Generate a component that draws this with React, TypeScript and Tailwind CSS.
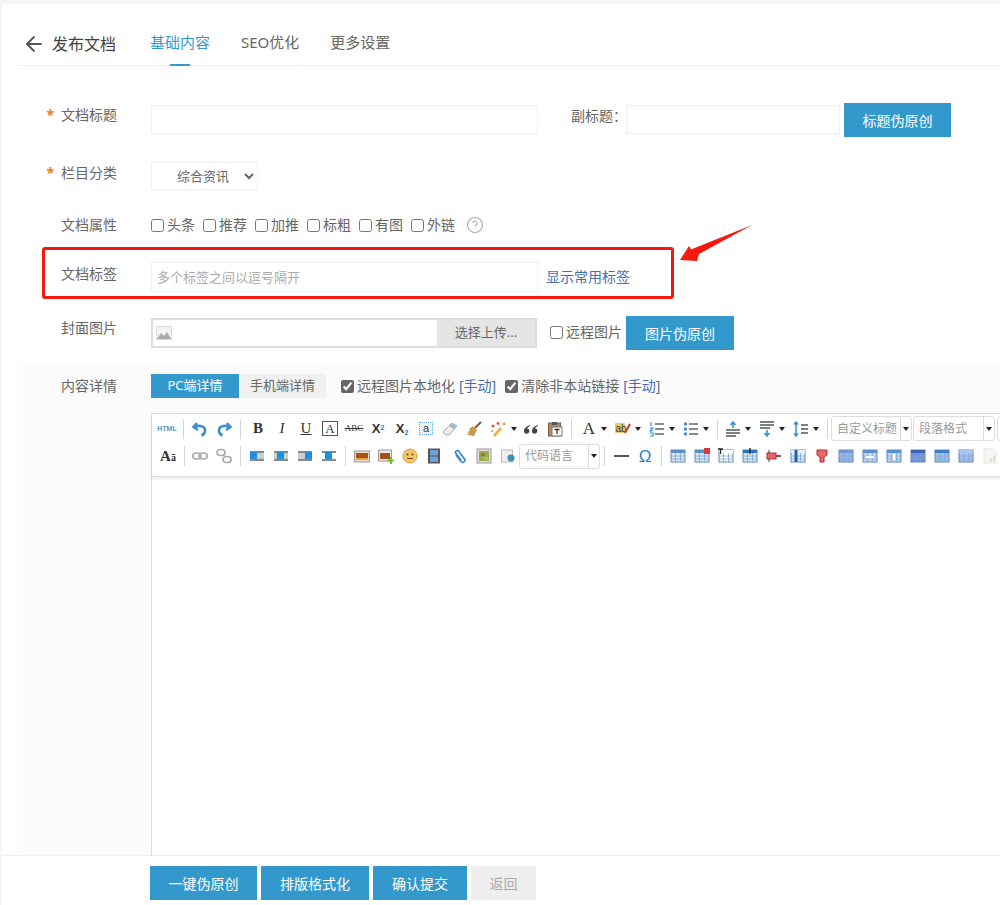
import type { ReactNode } from "react";
import { ArrowLeft, CircleHelp } from "lucide-react";

const BLUE = "bg-[#3399cc] text-white";

function Label({ children, required }: { children: string; required?: boolean }) {
  return (
    <div className="w-[100px] shrink-0 text-right text-[14px] leading-[20px] text-[#666]">
      {required && <span className="mr-[7px] font-bold text-[#f37b1d]">*</span>}
      {children}
    </div>
  );
}

function Check({ label, checked, link }: { label: string; checked?: boolean; link?: string }) {
  return (
    <label className="flex items-center text-[14px] leading-[20px] text-[#666]">
      <input type="checkbox" defaultChecked={checked} className="m-0 mr-[3px] h-[13px] w-[13px] accent-[#666]" />
      {label}
      {link && <span className="ml-[4px] text-[#4a6fb0]">{link}</span>}
    </label>
  );
}

function Slot({ children }: { children?: ReactNode }) {
  return <span className="flex h-[20px] w-[24px] shrink-0 items-center justify-center">{children}</span>;
}

function Sep() {
  return (
    <span className="flex h-[20px] w-[8px] shrink-0 justify-center">
      <span className="h-full w-px bg-[#d5d5d5]" />
    </span>
  );
}

function Caret() {
  return (
    <span className="flex h-[20px] w-[10px] shrink-0 items-center">
      <span className="border-x-[3px] border-t-[4px] border-x-transparent border-t-[#222]" />
    </span>
  );
}

function Combo({ label, width }: { label?: string; width: string }) {
  return (
    <span className={`flex h-[25px] shrink-0 items-center rounded-[3px] border border-[#ddd] bg-white text-[12px] text-[#999] ${width}`}>
      <span className="flex-1 truncate pl-[5px]">{label}</span>
      <span className="flex h-full w-[11px] items-center justify-center border-l border-[#ddd]">
        <span className="border-x-[3px] border-t-[4px] border-x-transparent border-t-[#222]" />
      </span>
    </span>
  );
}

function Svg({ children }: { children: ReactNode }) {
  return (
    <svg viewBox="0 0 16 16" className="h-[16px] w-[16px]">
      {children}
    </svg>
  );
}

const serif = "font-['Liberation_Serif',serif] leading-none text-[#333]";
const arial = "font-['Liberation_Sans',sans-serif] leading-none";

const undo = (
  <Svg>
    <path d="M5 2 1.500 6 6 9M2.500 6C8 3.500 13.500 5.500 13 10c-.2 2-1.500 3.500-3.500 4.500" fill="none" stroke="#3d8fd1" strokeWidth="2.600" />
  </Svg>
);
const redo = (
  <Svg>
    <path d="M11 2l3.500 4L10 9M13.500 6C8 3.500 2.500 5.500 3 10c.2 2 1.500 3.500 3.500 4.500" fill="none" stroke="#3d8fd1" strokeWidth="2.600" />
  </Svg>
);
const eraser = (
  <Svg>
    <path d="M1 11 10 2l5 3-8 9H4z" fill="#eee" stroke="#aaa" />
    <path d="M10 2l5 3-3 3.500L7 5z" fill="#9fb7cf" />
  </Svg>
);
const broom = (
  <Svg>
    <path d="M15 1 9 7" stroke="#8a5a20" strokeWidth="2" />
    <path d="M7 5l4 4-3 6-7-1 2-2-2-1 3-1-1-2z" fill="#c9984a" />
  </Svg>
);
const wand = (
  <Svg>
    <path d="M3 14 10 6l2 2-7 8z" fill="#f3b23c" />
    <circle cx="3" cy="5" r="1.600" fill="#e5533d" />
    <circle cx="8" cy="2.500" r="1.400" fill="#e5533d" />
    <circle cx="14" cy="3" r="1.400" fill="#f09a3e" />
    <circle cx="2" cy="10" r="1.100" fill="#f09a3e" />
  </Svg>
);
const quote = (
  <Svg>
    <path d="M7 4C4 5 1 7 1 10a2.700 2.700 0 1 0 3-2.600C4.500 6.500 6 5.500 7 5zM15 4c-3 1-6 3-6 6a2.700 2.700 0 1 0 3-2.600c.5-.9 2-1.900 3-2.400z" fill="#444" />
  </Svg>
);
const paste = (
  <Svg>
    <rect x="1.500" y="2" width="12" height="13" fill="#b08a68" stroke="#7b5d44" />
    <rect x="5" y="1" width="5" height="3" fill="#555" />
    <rect x="5" y="6" width="10" height="9" fill="#fff" stroke="#777" />
    <path d="M7.500 8.500h5M10 8.500v4.500" stroke="#333" strokeWidth="1.300" />
  </Svg>
);
const ab = (
  <Svg>
    <rect x="0" y="2" width="10" height="10" fill="#f5c76a" />
    <text x="0.500" y="11" fontSize="10" fill="#333" fontFamily="Liberation Sans">ab</text>
    <path d="M10 12 15 3" stroke="#b5443a" strokeWidth="2" />
  </Svg>
);
const ol = (
  <Svg>
    <path d="M6 3h9M6 8h9M6 13h9" stroke="#666" strokeWidth="1.600" />
    <path d="M2 1v4M1 7h3L1 10h3M1 12h3v3H1" stroke="#3d8fd1" fill="none" strokeWidth="1.200" />
  </Svg>
);
const ul = (
  <Svg>
    <path d="M6 3h9M6 8h9M6 13h9" stroke="#666" strokeWidth="1.600" />
    <circle cx="2.500" cy="3" r="1.700" fill="#3d8fd1" />
    <circle cx="2.500" cy="8" r="1.700" fill="#3d8fd1" />
    <circle cx="2.500" cy="13" r="1.700" fill="#3d8fd1" />
  </Svg>
);
const rowAfter = (
  <Svg>
    <path d="M8 1v6M5.500 4 8 1l2.500 3" stroke="#3d8fd1" strokeWidth="1.600" fill="none" />
    <path d="M1 9h14M1 12h14M1 15h10" stroke="#555" strokeWidth="1.500" />
  </Svg>
);
const rowBefore = (
  <Svg>
    <path d="M1 1h14M1 4h14M1 7h10" stroke="#555" strokeWidth="1.500" />
    <path d="M8 9v6M5.500 12 8 15l2.500-3" stroke="#3d8fd1" strokeWidth="1.600" fill="none" />
  </Svg>
);
const lineHeight = (
  <Svg>
    <path d="M3 1v14M1 3.500 3 1l2 2.500M1 12.500 3 15l2-2.500" stroke="#3d8fd1" strokeWidth="1.500" fill="none" />
    <path d="M8 4h7M8 8h7M8 12h7" stroke="#555" strokeWidth="1.600" />
  </Svg>
);
const link = (
  <Svg>
    <rect x="0.800" y="5" width="8" height="6" rx="3" fill="none" stroke="#aaa" strokeWidth="1.700" />
    <rect x="7.200" y="5" width="8" height="6" rx="3" fill="none" stroke="#aaa" strokeWidth="1.700" />
  </Svg>
);
const unlink = (
  <Svg>
    <rect x="1" y="1.500" width="8" height="6" rx="3" fill="none" stroke="#aaa" strokeWidth="1.700" />
    <rect x="7" y="8.500" width="8" height="6" rx="3" fill="none" stroke="#aaa" strokeWidth="1.700" />
  </Svg>
);

function Float({ side }: { side: "left" | "right" | "none" | "center" }) {
  const x = side === "left" ? 1 : side === "right" ? 8 : 4;
  return (
    <Svg>
      <rect x="1" y="3" width="14" height="2" fill="#888" />
      <rect x="1" y="11" width="14" height="2" fill="#888" />
      <rect x="1" y="5" width="14" height="6" fill={side === "center" ? "#fff" : "#ccc"} />
      <rect x={x} y="4" width="7" height="7" fill="#1e90e0" />
    </Svg>
  );
}

const image = (
  <Svg>
    <rect x="0.500" y="3" width="15" height="11" fill="#e8dcc8" stroke="#999" />
    <rect x="2" y="5" width="12" height="7" fill="#a8501a" />
    <path d="M2 10h12v2H2z" fill="#f0a030" />
  </Svg>
);
const imageAdd = (
  <Svg>
    <rect x="0.500" y="2" width="13" height="11" fill="#e8e8e8" stroke="#999" />
    <rect x="2" y="5" width="10" height="6" fill="#a8501a" />
    <path d="M12 9h2v2.500h2v2h-2V16h-2v-2.500H9.500v-2H12z" fill="#7ab82e" />
  </Svg>
);
const smile = (
  <Svg>
    <circle cx="8" cy="8" r="7" fill="#f4c56a" stroke="#dba04a" />
    <circle cx="5.500" cy="6.500" r="1" fill="#6b4a1a" />
    <circle cx="10.500" cy="6.500" r="1" fill="#6b4a1a" />
    <path d="M5 10.500h6" stroke="#6b4a1a" />
  </Svg>
);
const video = (
  <Svg>
    <rect x="2" y="0.500" width="12" height="15" fill="#555" />
    <rect x="4" y="2" width="8" height="5.500" fill="#6f9fdc" />
    <rect x="4" y="8.500" width="8" height="5.500" fill="#6f9fdc" />
  </Svg>
);
const clip = (
  <Svg>
    <path d="M4 7l5 6.500c1.500 1.800 5 0 3.500-2.500L7 3.500C6 2 3 2.500 3.500 5l5.500 7" fill="none" stroke="#3d86d1" strokeWidth="1.700" />
  </Svg>
);
const map = (
  <Svg>
    <rect x="1" y="1" width="14" height="14" fill="#ddd" stroke="#999" />
    <rect x="3" y="3" width="10" height="10" fill="#8fb24e" />
    <path d="M5 5h4v3H5z" fill="#d06040" />
    <path d="M8 9h4v3H8z" fill="#e0b040" />
  </Svg>
);
const frame = (
  <Svg>
    <rect x="1.500" y="2" width="11" height="12" fill="#eee" stroke="#bbb" />
    <circle cx="11" cy="10" r="3.500" fill="#3f8fb0" />
  </Svg>
);

function Grid({ fill = "#dbe6f6", head = "#5a8fd0", mark }: { fill?: string; head?: string; mark?: ReactNode }) {
  return (
    <Svg>
      <rect x="1" y="2" width="14" height="12" fill={fill} stroke="#5a86bc" />
      <rect x="1" y="2" width="14" height="3" fill={head} />
      <path d="M5.500 5v9M10.500 5v9M1 8h14M1 11h14" stroke="#7ea4d0" strokeWidth="0.800" />
      {mark}
    </Svg>
  );
}

const tableIcons = [
  <Grid />,
  <Grid mark={<rect x="10" y="0" width="6" height="6" fill="#d9363a" />} />,
  <Grid fill="#fff" head="#fff" mark={<path d="M0 1h5M2.500 1v5" stroke="#222" strokeWidth="1.400" />} />,
  <Grid head="#2f6fc0" mark={<path d="M8 0v6" stroke="#222" strokeWidth="1.400" />} />,
  <Svg>
    <rect x="1" y="5" width="9" height="6" fill="#e8686a" stroke="#a33" />
    <path d="M10 8h5" stroke="#333" strokeWidth="1.500" />
    <path d="M3 2v3M3 11v3" stroke="#333" />
  </Svg>,
  <Grid fill="#e6eefa" head="#e6eefa" mark={<path d="M6 2v12" stroke="#1f5fb0" strokeWidth="3" />} />,
  <Svg>
    <path d="M3 2h10v5l-3 2v5H6V9L3 7z" fill="#e8686a" stroke="#a33" />
  </Svg>,
  <Grid fill="#9db8e6" head="#7396d6" />,
  <Grid fill="#c7daf2" mark={<path d="M4 9h8" stroke="#fff" strokeWidth="2.500" />} />,
  <Grid fill="#c7daf2" mark={<path d="M8 6v6" stroke="#fff" strokeWidth="2.500" />} />,
  <Grid fill="#6f8fd8" head="#3f62b5" />,
  <Grid fill="#9fc2ea" head="#3f7fc8" />,
  <Grid fill="#a9c4ee" head="#a9c4ee" />,
  <Svg>
    <path d="M2 1h9l3 3v11H2z" fill="#f6f6f6" stroke="#e5e5e5" />
    <path d="M8 14v-4h2v4zM11 14V8h2v6z" fill="#dde3c8" />
  </Svg>,
];

function Toolbar() {
  return (
    <div className="border-b border-[#ddd] bg-white pt-[2px] pb-[7px] pl-[3px] shadow-[0_2px_3px_rgba(0,0,0,0.08)]">
      <div className="flex h-[25px] items-center">
        <Slot><span className={`${arial} text-[7px] font-bold text-[#5b8fc0]`}>HTML</span></Slot>
        <Sep />
        <span className="w-px" />
        <Slot>{undo}</Slot>
        <Slot>{redo}</Slot>
        <Sep />
        <span className="w-[2px]" />
        <Slot><span className={`${serif} text-[15px] font-bold`}>B</span></Slot>
        <Slot><span className={`${serif} text-[15px] italic`}>I</span></Slot>
        <Slot><span className={`${serif} text-[15px] underline`}>U</span></Slot>
        <Slot><span className={`${serif} border border-[#555] px-[2px] text-[13px]`}>A</span></Slot>
        <Slot><span className={`${serif} text-[9px] line-through`}>ABC</span></Slot>
        <Slot><span className={`${arial} text-[13px] font-bold text-[#333]`}>X<sup className="text-[7px] text-[#3d6fd1]">2</sup></span></Slot>
        <Slot><span className={`${arial} text-[13px] font-bold text-[#333]`}>X<sub className="text-[7px] text-[#3d6fd1]">2</sub></span></Slot>
        <Slot><span className={`${arial} border border-dotted border-[#6aa5e0] bg-[#eef4fb] px-[3px] text-[11px] text-[#333]`}>a</span></Slot>
        <Slot>{eraser}</Slot>
        <Slot>{broom}</Slot>
        <Slot>{wand}</Slot>
        <span className="ml-[1px]"><Caret /></span>
        <span className="-ml-[2px]"><Slot>{quote}</Slot></span>
        <Slot>{paste}</Slot>
        <Sep />
        <span className="w-[2px]" />
        <Slot><span className={`${serif} text-[17px]`}>A</span></Slot>
        <Caret />
        <Slot>{ab}</Slot>
        <Caret />
        <Slot>{ol}</Slot>
        <Caret />
        <Slot>{ul}</Slot>
        <Caret />
        <Sep />
        <Slot>{rowAfter}</Slot>
        <Caret />
        <Slot>{rowBefore}</Slot>
        <Caret />
        <Slot>{lineHeight}</Slot>
        <Caret />
        <Sep />
        <Combo label="自定义标题" width="w-[81px]" />
        <span className="w-px" />
        <Combo label="段落格式" width="w-[82px]" />
        <span className="w-[2px]" />
        <Combo width="w-[82px]" />
      </div>
      <div className="mt-[2px] flex h-[26px] items-center">
        <span className="w-px" />
        <Slot><span className={`${serif} text-[15px] font-bold`}>A<span className="text-[10px]">ā</span></span></Slot>
        <Sep />
        <Slot>{link}</Slot>
        <Slot>{unlink}</Slot>
        <Sep />
        <span className="w-px" />
        <Slot><Float side="left" /></Slot>
        <Slot><Float side="none" /></Slot>
        <Slot><Float side="right" /></Slot>
        <Slot><Float side="center" /></Slot>
        <Sep />
        <span className="w-px" />
        <Slot>{image}</Slot>
        <Slot>{imageAdd}</Slot>
        <Slot>{smile}</Slot>
        <Slot>{video}</Slot>
        <span className="w-[2px]" />
        <Slot>{clip}</Slot>
        <Slot>{map}</Slot>
        <Slot>{frame}</Slot>
        <Combo label="代码语言" width="w-[81px] -ml-px" />
        <Sep />
        <span className="w-px" />
        <Slot><span className="h-[2px] w-[15px] bg-[#555]" /></Slot>
        <Slot><span className={`${arial} text-[17px] text-[#2a7fc8]`}>Ω</span></Slot>
        <Sep />
        <span className="w-px" />
        {tableIcons.map((icon, i) => (
          <Slot key={i}>{icon}</Slot>
        ))}
      </div>
    </div>
  );
}

export default function App() {
  return (
    <div className="h-[905px] w-[1000px] overflow-hidden bg-[#f5f5f5] pt-[4px] pl-[2px] font-['Noto_Sans','Noto_Sans_CJK_SC',sans-serif]">
      <div className="flex h-full flex-col bg-white">
        <header className="ml-[15px] flex h-[62px] shrink-0 items-center border-b border-[#eee] pt-[18px]">
          <ArrowLeft className="ml-[5px] h-[24px] w-[24px] text-[#555]" strokeWidth={1.8} />
          <h1 className="ml-[6px] w-[98px] text-[16px] font-normal text-[#444]">发布文档</h1>
          <nav className="-mt-[2px] flex h-full items-center gap-[31px] text-[15px] text-[#666]">
            <a className="relative flex h-full items-center text-[#3399cc]">
              基础内容
              <span className="absolute bottom-[-2px] left-[20px] h-[2px] w-[20px] bg-[#3399cc]" />
            </a>
            <a>SEO优化</a>
            <a>更多设置</a>
          </nav>
        </header>

        <div className="mt-[37px] flex h-[34px] shrink-0 pl-[15px]">
          <div className="mt-[2px]"><Label required>文档标题</Label></div>
          <input className="mt-[2px] ml-[34px] h-[29px] w-[387px] border border-[#f0f0f0]" />
          <span className="mt-[3px] ml-[33px] text-[14px] leading-[20px] text-[#666]">副标题：</span>
          <input className="mt-[2px] ml-[-1px] h-[29px] w-[214px] border border-[#f0f0f0]" />
          <button className={`ml-[4px] h-[34px] w-[107px] text-[14px] ${BLUE}`}>标题伪原创</button>
        </div>

        <div className="mt-[25px] flex h-[28px] shrink-0 pl-[15px]">
          <div className="mt-[1px]"><Label required>栏目分类</Label></div>
          <select className="ml-[34px] h-[28px] w-[107px] border border-[#f0f0f0] bg-white pl-[21px] text-[13px] text-[#666]">
            <option>综合资讯</option>
          </select>
        </div>

        <div className="mt-[25px] flex h-[20px] shrink-0 items-center pl-[15px]">
          <Label>文档属性</Label>
          <div className="ml-[34px] flex items-center gap-[8px]">
            {["头条", "推荐", "加推", "标粗", "有图", "外链"].map((t) => (
              <Check key={t} label={t} />
            ))}
            <CircleHelp className="ml-[3px] h-[18px] w-[18px] text-[#aaa]" strokeWidth={1.5} />
          </div>
        </div>

        <div className="relative mt-[27px] flex h-[30px] shrink-0 pl-[15px]">
          <div className="mt-[2px]"><Label>文档标签</Label></div>
          <input
            placeholder="多个标签之间以逗号隔开"
            className="ml-[34px] h-[30px] w-[387px] border border-[#f0f0f0] pl-[5px] text-[13px] placeholder:text-[#aaa]"
          />
          <a className="mt-[5px] ml-[8px] text-[14px] leading-[20px] text-[#4a6fb0]">显示常用标签</a>
          <div className="absolute top-[-15px] left-[40px] h-[52px] w-[632px] rounded-[3px] border-[3px] border-[#f5190f]" />
          <svg viewBox="0 0 80 42" className="absolute top-[-40px] left-[676px] h-[42px] w-[80px]">
            <path d="M2 38 11 24l2 3.500L74 3 21 32l-2 7z" fill="#f5190f" />
          </svg>
        </div>

        <div className="mt-[24px] flex h-[34px] shrink-0 pl-[15px]">
          <div className="mt-[2px]"><Label>封面图片</Label></div>
          <div className="mt-[2px] ml-[34px] flex h-[30px] w-[386px] border-2 border-[#ddd] bg-white">
            <svg viewBox="0 0 16 14" className="mt-[6px] ml-[3px] h-[14px] w-[16px]">
              <rect width="16" height="14" fill="#d8d8d8" />
              <rect x="1" y="1" width="14" height="12" fill="#f2f2f2" />
              <path d="M1 13l4-6 3 3 3-4 4 7z" fill="#aaa" />
            </svg>
            <span className="ml-auto flex w-[98px] items-center justify-center bg-[#e5e5e5] text-[13px] text-[#666]">选择上传...</span>
          </div>
          <div className="ml-[13px] flex h-[32px] items-center">
            <Check label="远程图片" />
          </div>
          <button className={`ml-[4px] h-[34px] w-[108px] text-[14px] ${BLUE}`}>图片伪原创</button>
        </div>

        <section className="mt-[12px] ml-[15px] flex min-h-0 flex-1 overflow-hidden bg-[#fbfbfb] pt-[12px]">
          <div className="mt-[2px] w-[100px] shrink-0">
            <Label>内容详情</Label>
          </div>
          <div className="ml-[34px] flex w-[1000px] shrink-0 flex-col">
            <div className="flex h-[24px] shrink-0 items-center text-[13px]">
              <span className={`flex h-full w-[88px] items-center justify-center ${BLUE}`}>PC端详情</span>
              <span className="flex h-full w-[87px] items-center justify-center bg-[#f0f0f0] text-[#666]">手机端详情</span>
              <div className="ml-[15px] flex items-center gap-[9px]">
                <Check checked label="远程图片本地化" link="[手动]" />
                <Check checked label="清除非本站链接" link="[手动]" />
              </div>
            </div>
            <div className="mt-[15px] flex flex-1 flex-col border border-b-0 border-[#ddd] bg-white">
              <Toolbar />
            </div>
          </div>
        </section>

        <footer className="flex h-[50px] shrink-0 gap-[4px] border-t border-[#eee] pt-[10px] pl-[148px] text-[14px]">
          <button className={`h-[34px] w-[107px] ${BLUE}`}>一键伪原创</button>
          <button className={`h-[34px] w-[108px] ${BLUE}`}>排版格式化</button>
          <button className={`h-[34px] w-[94px] ${BLUE}`}>确认提交</button>
          <button className="h-[34px] w-[65px] bg-[#eeeeee] text-[#aaa]">返回</button>
        </footer>
      </div>
    </div>
  );
}
